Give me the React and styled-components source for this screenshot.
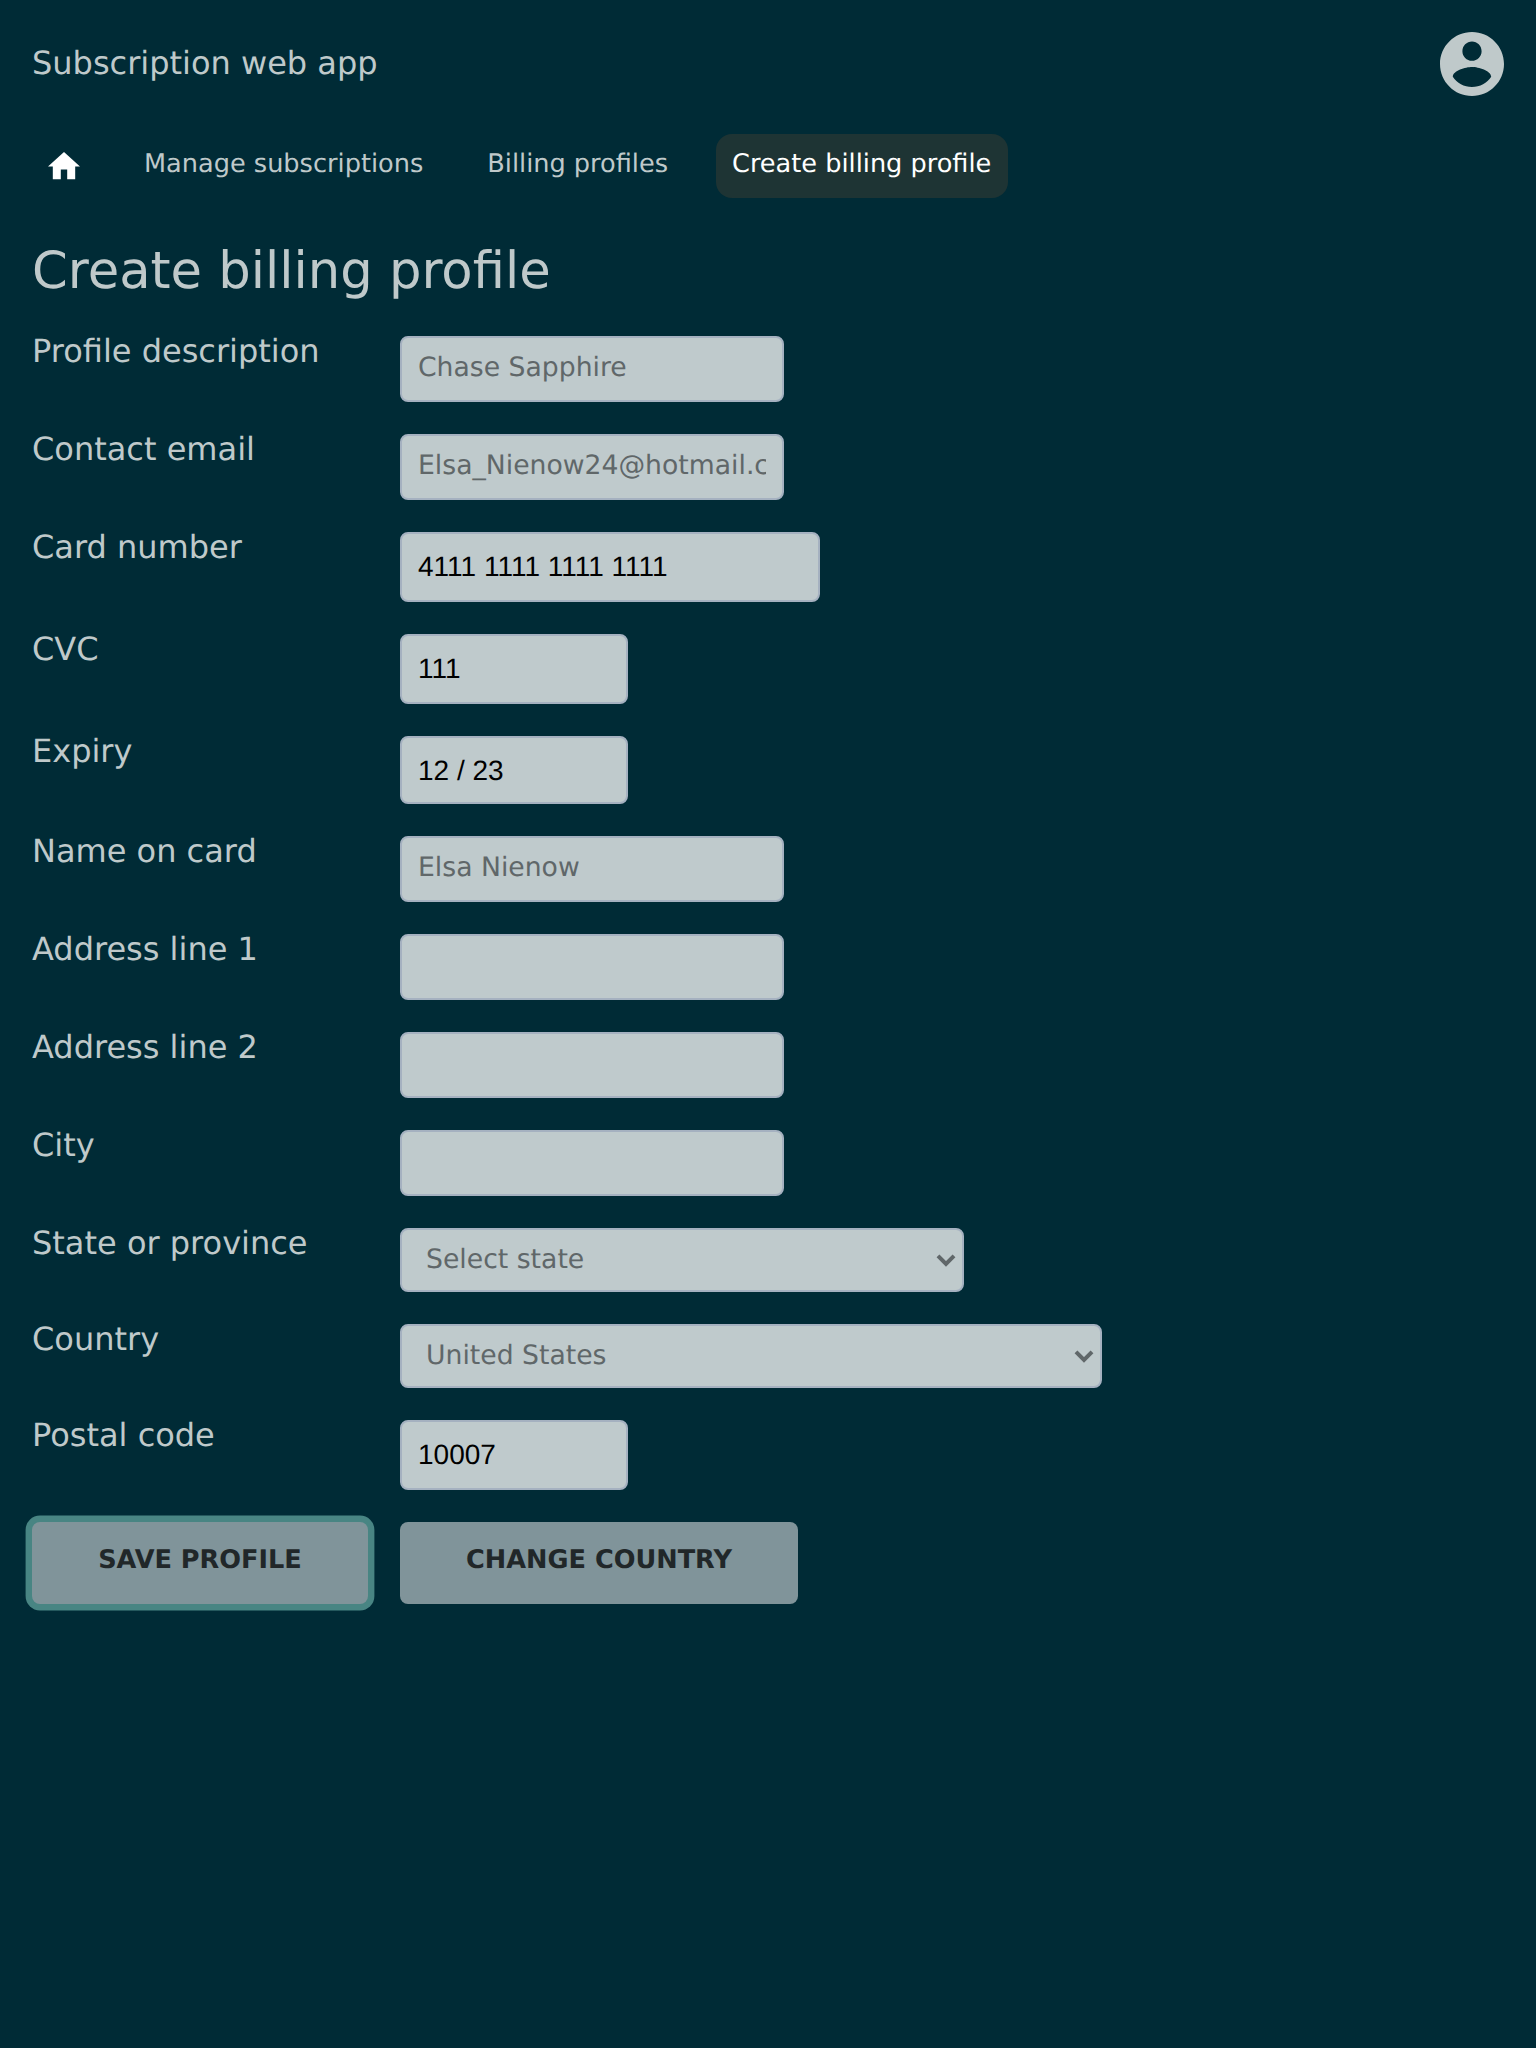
import React from "react";
import styled, { createGlobalStyle, css } from "styled-components";

const GlobalStyle = createGlobalStyle`
  *, *::before, *::after { box-sizing: border-box; }
  body, input, select, button { text-rendering: geometricPrecision; }
  body {
    margin: 0;
    background: #002b36;
    color: #bfc9ca;
    font-family: "DejaVu Sans", sans-serif;
    font-size: 32px;
    line-height: 30px;
  }
`;

const Page = styled.div`
  min-height: 2048px;
  padding: 32px;
`;

const Header = styled.header`
  display: flex;
  justify-content: space-between;
  align-items: flex-start;
  height: 64px;
`;

const Brand = styled.div`
  padding-top: 16px;
`;

const AccountIcon = styled.svg`
  display: block;
  width: 64px;
  height: 64px;
  fill: currentColor;
`;

const Nav = styled.nav`
  display: flex;
  gap: 32px;
  margin-top: 38px;
`;

const NavLink = styled.a`
  height: 64px;
  padding: 15px 16px 0;
  padding-right: ${(p) => (p.$active ? "17px" : "16px")};
  border-radius: 16px;
  font-size: 25.6px;
  color: ${(p) => (p.$active ? "#ffffff" : "inherit")};
  background: ${(p) => (p.$active ? "#1e3434" : "transparent")};
  white-space: nowrap;
`;

const HomeIcon = styled.svg`
  display: block;
  width: 32px;
  height: 27.2px;
  margin-top: 3.4px;
  fill: #ffffff;
`;

const Title = styled.h1`
  margin: 42px 0 0;
  height: 96px;
  font-size: 51.2px;
  font-weight: 400;
  line-height: 62px;
`;

const Form = styled.form`
  display: grid;
  grid-template-columns: 336px auto;
  justify-content: start;
  column-gap: 32px;
  row-gap: 32px;
  align-items: start;
`;

const Label = styled.label`
  white-space: nowrap;
`;

const fieldBox = css`
  display: block;
  margin: 0;
  border: 2px solid #a5b1c0;
  border-radius: 8px;
  background: #bfcacc;
  outline: none;
`;

const TextInput = styled.input`
  ${fieldBox}
  width: 384px;
  height: 66px;
  padding: 14px 16px 17px;
  font: 26.667px/31px "DejaVu Sans", sans-serif;
  color: #606769;
`;

const SecureInput = styled.input`
  ${fieldBox}
  width: ${(p) => p.$width}px;
  height: ${(p) => p.$height}px;
  padding: 17px 16px ${(p) => p.$height - 53}px;
  font: 28px/32px "Liberation Sans", Arial, sans-serif;
  color: #000000;
`;

const SelectWrap = styled.div`
  position: relative;
  width: ${(p) => p.$width}px;
`;

const Select = styled.select`
  ${fieldBox}
  appearance: none;
  width: 100%;
  height: 64px;
  padding: 14px 48px 15px 24px;
  font: 26.667px/31px "DejaVu Sans", sans-serif;
  color: #606769;
`;

const Chevron = styled.svg`
  position: absolute;
  right: 8px;
  top: 26px;
  width: 20px;
  height: 14px;
  fill: none;
  stroke: #606769;
  stroke-width: 4;
  pointer-events: none;
`;

const Button = styled.button`
  display: block;
  width: ${(p) => p.$width}px;
  height: 82px;
  margin: 0;
  padding: 23px 0 29px;
  border: 0;
  border-radius: 8px;
  outline: none;
  background: #80949a;
  color: #212729;
  font: bold 25.6px/30px "DejaVu Sans", sans-serif;
  text-transform: uppercase;
  box-shadow: ${(p) => (p.$focused ? "0 0 0 6.4px #488583" : "none")};
`;

const fields = [
  { label: "Profile description", type: "text", value: "Chase Sapphire" },
  { label: "Contact email", type: "text", value: "Elsa_Nienow24@hotmail.com" },
  { label: "Card number", type: "secure", value: "4111 1111 1111 1111", width: 420, height: 70 },
  { label: "CVC", type: "secure", value: "111", width: 228, height: 70 },
  { label: "Expiry", type: "secure", value: "12 / 23", width: 228, height: 68 },
  { label: "Name on card", type: "text", value: "Elsa Nienow" },
  { label: "Address line 1", type: "text", value: "" },
  { label: "Address line 2", type: "text", value: "" },
  { label: "City", type: "text", value: "" },
  { label: "State or province", type: "select", value: "Select state", width: 564 },
  { label: "Country", type: "select", value: "United States", width: 702 },
  { label: "Postal code", type: "secure", value: "10007", width: 228, height: 70 },
];

function Field({ id, field }) {
  if (field.type === "select") {
    return (
      <SelectWrap $width={field.width}>
        <Select id={id} defaultValue={field.value}>
          <option>{field.value}</option>
        </Select>
        <Chevron viewBox="0 0 20 14" aria-hidden="true">
          <path d="M2 1.9L10 9.9L18 1.9" />
        </Chevron>
      </SelectWrap>
    );
  }
  if (field.type === "secure") {
    return (
      <SecureInput id={id} $width={field.width} $height={field.height} defaultValue={field.value} />
    );
  }
  return <TextInput id={id} defaultValue={field.value} />;
}

export default function App() {
  return (
    <>
      <GlobalStyle />
      <Page>
        <Header>
          <Brand>Subscription web app</Brand>
          <AccountIcon viewBox="2 2 20 20" aria-hidden="true">
            <path d="M12 2C6.48 2 2 6.48 2 12s4.48 10 10 10 10-4.48 10-10S17.52 2 12 2zm0 3c1.66 0 3 1.34 3 3s-1.34 3-3 3-3-1.34-3-3 1.34-3 3-3zm0 14.2c-2.5 0-4.71-1.28-6-3.22.03-1.99 4-3.08 6-3.08 1.99 0 5.97 1.09 6 3.08-1.29 1.94-3.5 3.22-6 3.22z" />
          </AccountIcon>
        </Header>
        <Nav>
          <NavLink>
            <HomeIcon viewBox="2 3 20 17" aria-hidden="true">
              <path d="M10 20v-6h4v6h5v-8h3L12 3 2 12h3v8z" />
            </HomeIcon>
          </NavLink>
          <NavLink>Manage subscriptions</NavLink>
          <NavLink>Billing profiles</NavLink>
          <NavLink $active>Create billing profile</NavLink>
        </Nav>
        <Title>Create billing profile</Title>
        <Form onSubmit={(e) => e.preventDefault()}>
          {fields.map((field, i) => (
            <React.Fragment key={field.label}>
              <Label htmlFor={`field-${i}`}>{field.label}</Label>
              <Field id={`field-${i}`} field={field} />
            </React.Fragment>
          ))}
          <Button $width={336} $focused type="submit">Save profile</Button>
          <Button $width={398} type="button">Change country</Button>
        </Form>
      </Page>
    </>
  );
}
